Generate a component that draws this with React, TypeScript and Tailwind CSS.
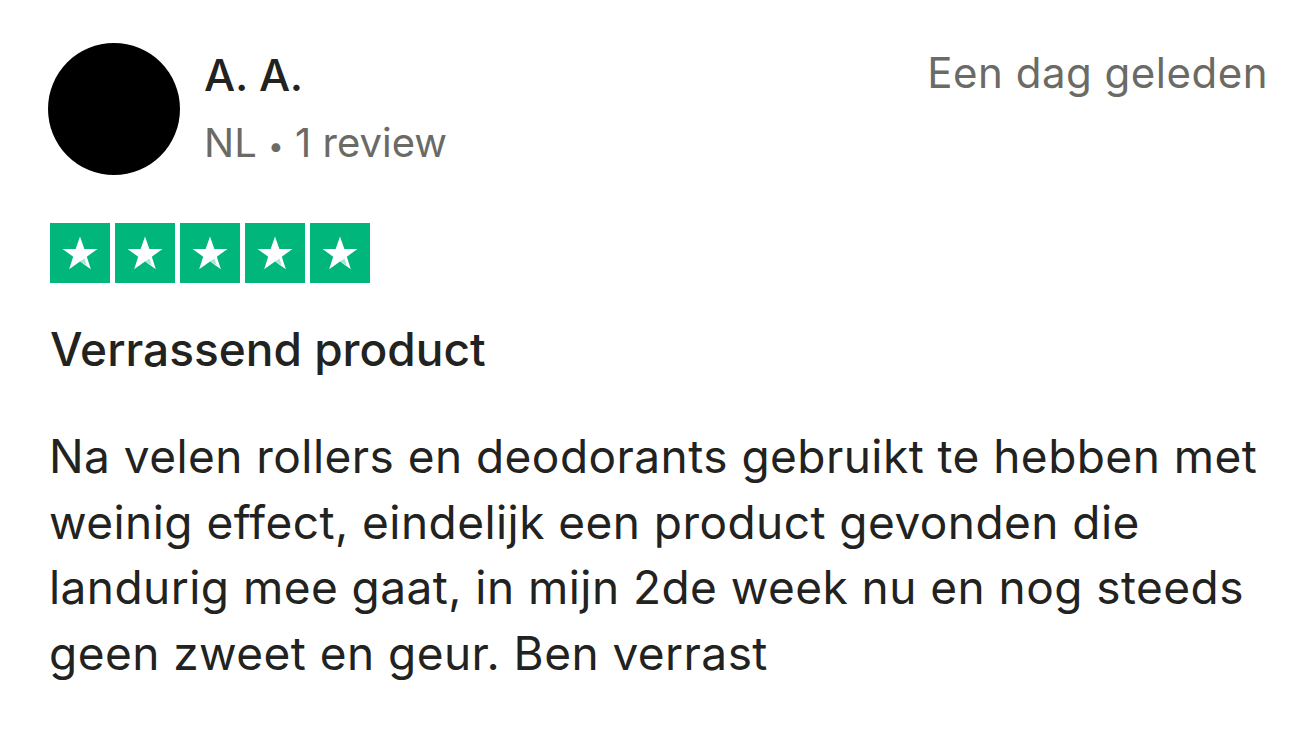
import React from "react";

function Star() {
  return (
    <div className="w-[60px] h-[60px] bg-[#00b67a] flex items-center justify-center">
      <svg viewBox="0 0 24 24" width="42" height="42">
        <path d="M12 2.6l2.5 7.1h7.5l-6.1 4.4 2.3 7.2L12 16.9l-6.2 4.4 2.3-7.2L2 9.7h7.5z" fill="#fff" />
        <path d="M14.6 15.1l1.2 3.9L12 16.9z" fill="#00b67a" opacity="0.35" />
      </svg>
    </div>
  );
}

export default function App() {
  return (
    <div className="w-[1292px] h-[732px] bg-white text-[#222220] overflow-hidden" style={{ fontFamily: "Inter, 'Liberation Sans', sans-serif" }}>
      <div className="pl-[48px] pr-[24px] pt-[43px]">
        <div className="flex items-start">
          <div className="w-[132px] h-[132px] rounded-full bg-black shrink-0" />
          <div className="ml-[24px] flex flex-col pt-[2px]">
            <div className="text-[44px] leading-[60px] font-medium tracking-[-0.3px]">A. A.</div>
            <div className="h-[60px] text-[40px] leading-[60px] text-[#6b6a64] mt-[8px] tracking-[0px]">NL <span className="text-[28px] leading-[0px] align-middle">•</span> 1 review</div>
          </div>
          <div className="ml-auto text-[42px] leading-[60px] text-[#6b6a64] tracking-[0.5px]">Een dag geleden</div>
        </div>
        <div className="mt-[48px] ml-[2px] flex gap-[5px]">
          <Star /><Star /><Star /><Star /><Star />
        </div>
        <div className="mt-[36px] ml-[2px] text-[46px] leading-[60px] font-medium tracking-[0px]">Verrassend product</div>
        <div className="mt-[45px] ml-[1px] w-[1225px] text-[46px] leading-[65.5px] tracking-[0.45px]">
          Na velen rollers en deodorants gebruikt te hebben met weinig effect, eindelijk een product gevonden die landurig mee gaat, in mijn 2de week nu en nog steeds geen zweet en geur. Ben verrast
        </div>
      </div>
    </div>
  );
}
